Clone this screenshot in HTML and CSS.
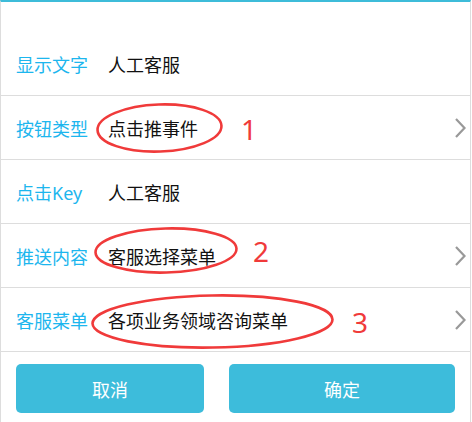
FILE: index.html
```html
<!DOCTYPE html>
<html lang="zh-CN">
<head>
<meta charset="utf-8">
<title>菜单设置</title>
<link rel="stylesheet" href="styles.css">
</head>
<body>
<div class="panel">
  <div class="rows">
    <div class="row">
      <span class="label">显示文字</span>
      <span class="value">人工客服</span>
    </div>
    <div class="row">
      <span class="label">按钮类型</span>
      <span class="value">点击推事件</span>
      <svg class="chev" viewBox="0 0 12 20" width="12" height="20"><polyline points="2,1 10.5,10 2,19" /></svg>
    </div>
    <div class="row">
      <span class="label">点击Key</span>
      <span class="value">人工客服</span>
    </div>
    <div class="row">
      <span class="label">推送内容</span>
      <span class="value">客服选择菜单</span>
      <svg class="chev" viewBox="0 0 12 20" width="12" height="20"><polyline points="2,1 10.5,10 2,19" /></svg>
    </div>
    <div class="row">
      <span class="label">客服菜单</span>
      <span class="value">各项业务领域咨询菜单</span>
      <svg class="chev" viewBox="0 0 12 20" width="12" height="20"><polyline points="2,1 10.5,10 2,19" /></svg>
    </div>
  </div>
  <div class="actions">
    <button class="btn">取消</button>
    <button class="btn">确定</button>
  </div>

  <svg class="marks" viewBox="0 0 471 422" width="471" height="422">
    <ellipse cx="159.5" cy="128" rx="62" ry="23.5" transform="rotate(-2 159.5 128)" />
    <ellipse cx="166" cy="250.5" rx="70.5" ry="22" transform="rotate(-1.5 166 250.5)" />
    <ellipse cx="212.5" cy="321.5" rx="120" ry="26" transform="rotate(-1 212.5 321.5)" />
  </svg>
  <span class="num num1">1</span>
  <span class="num num2">2</span>
  <span class="num num3">3</span>
</div>
</body>
</html>
```

FILE: styles.css
```css
html, body {
  margin: 0;
  padding: 0;
  background: #ffffff;
}

body {
  font-family: "Noto Sans", "Noto Sans CJK SC", sans-serif;
}

.panel {
  position: relative;
  box-sizing: border-box;
  width: 471px;
  height: 422px;
  border-top: 2px solid #3dbcd9;
  border-left: 1px solid #dddddd;
  border-right: 1px solid #dddddd;
  background: #ffffff;
}

.rows {
  padding-top: 30px;
}

.row {
  display: flex;
  align-items: center;
  height: 63px;
  border-bottom: 1px solid #dddddd;
  padding-left: 15px;
  padding-right: 4px;
  font-size: 18px;
}

.label {
  width: 92px;
  flex: none;
  color: #1db6ee;
}

.value {
  color: #111111;
}

.chev {
  margin-left: auto;
  flex: none;
}

.chev polyline {
  fill: none;
  stroke: #999999;
  stroke-width: 2.2;
}

.actions {
  display: grid;
  grid-template-columns: 188px 226px;
  column-gap: 25px;
  padding: 12px 0 0 15px;
}

.btn {
  height: 49px;
  border: none;
  border-radius: 5px;
  background: #3dbcdb;
  color: #ffffff;
  font-family: "Noto Sans", "Noto Sans CJK SC", sans-serif;
  font-size: 18px;
  padding: 0;
}

.marks {
  position: absolute;
  left: -1px;
  top: -2px;
  pointer-events: none;
}

.marks ellipse {
  fill: none;
  stroke: #f03a3a;
  stroke-width: 2.6;
}

.num {
  position: absolute;
  color: #f03a3a;
  font-family: "Noto Sans", sans-serif;
  font-size: 28px;
  line-height: 1;
}

.num1 { left: 240px; top: 113px; }
.num2 { left: 252px; top: 235px; }
.num3 { left: 351px; top: 306px; }
```
